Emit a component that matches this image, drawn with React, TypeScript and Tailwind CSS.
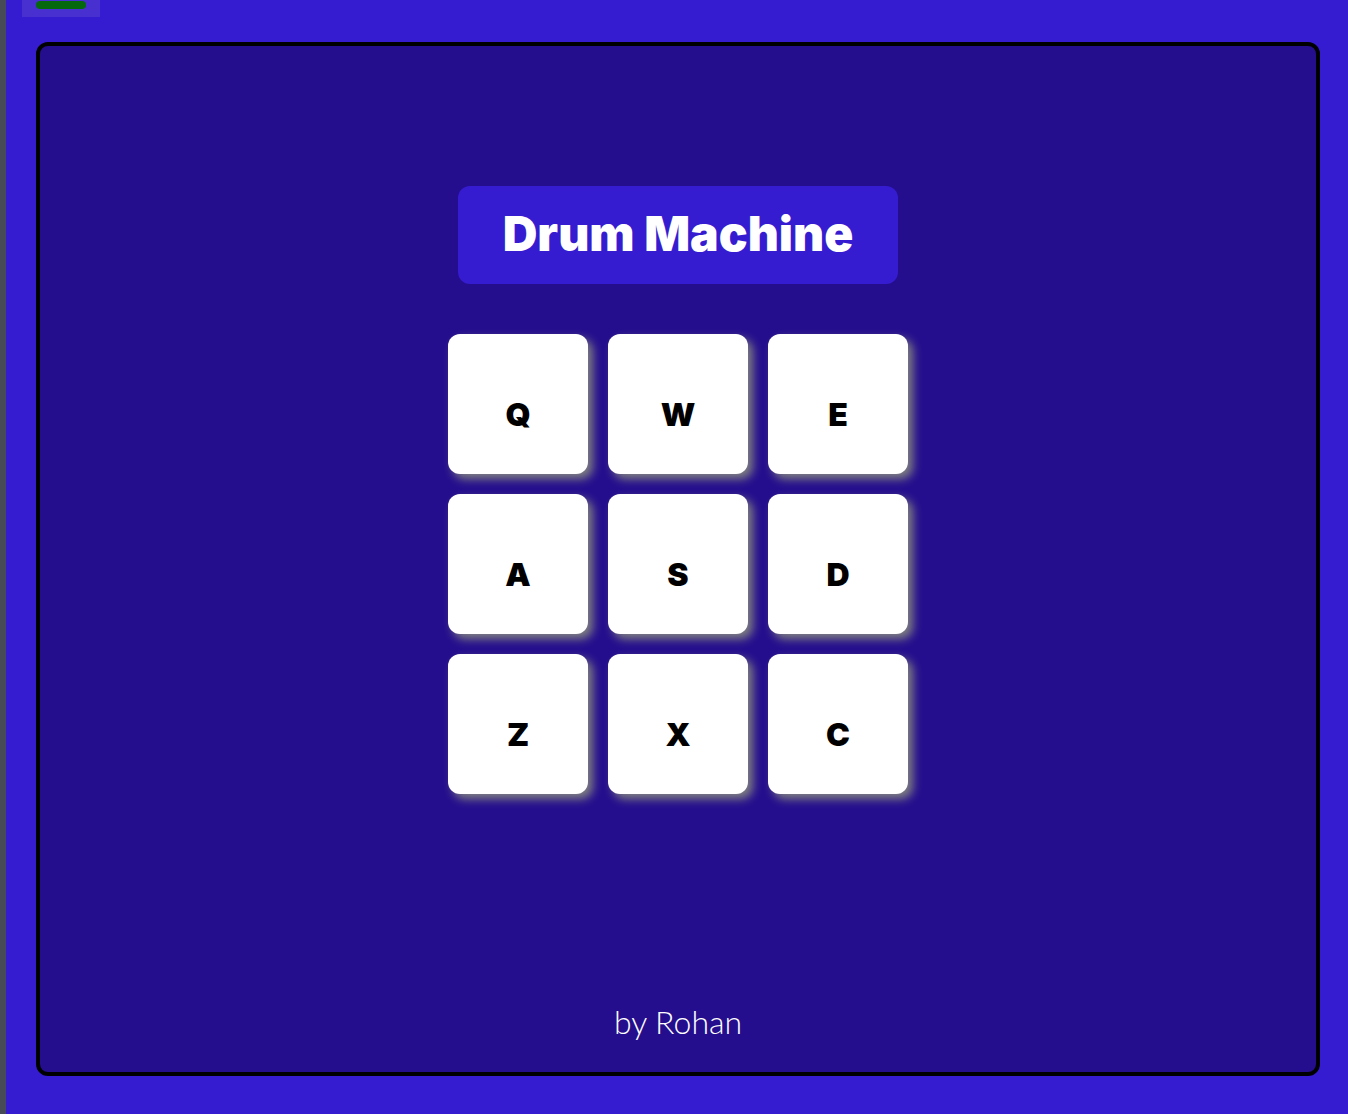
const pads = ["Q", "W", "E", "A", "S", "D", "Z", "X", "C"];

export default function App() {
  return (
    <div className="flex min-h-screen flex-col border-l-6 border-[#474a57] bg-[#351cd0] pr-7 pb-[38px] pl-[30px] antialiased">
      <header className="-ml-[14px] flex">
        <button
          type="button"
          aria-label="Toggle menu"
          className="flex h-[17px] w-[78px] items-start justify-center bg-[#472fd0] pt-px"
        >
          <span className="block h-2 w-[50px] rounded-full bg-[#06680c]" />
        </button>
      </header>

      <main className="mt-[25px] flex grow flex-col items-center rounded-xl border-4 border-black bg-[#250e8d] px-4 pt-[140px] pb-[26px]">
        <h1 className="flex h-[98px] w-full max-w-[440px] items-center justify-center rounded-xl bg-[#351cd0] pb-0.5 font-['Inter',sans-serif] text-5xl font-black text-white">
          Drum Machine
        </h1>

        <div className="mt-[50px] grid grid-cols-3 gap-5">
          {pads.map((pad) => (
            <button
              key={pad}
              type="button"
              className="flex size-[140px] items-center justify-center rounded-xl bg-white pt-[22px] font-['Inter',sans-serif] text-[32px] leading-10 font-black text-black shadow-[5px_5px_10px_#808080]"
            >
              {pad}
            </button>
          ))}
        </div>

        <p className="mt-auto pt-12 font-['Lato',sans-serif] text-[32px] leading-12 font-light text-white">
          by Rohan
        </p>
      </main>
    </div>
  );
}
